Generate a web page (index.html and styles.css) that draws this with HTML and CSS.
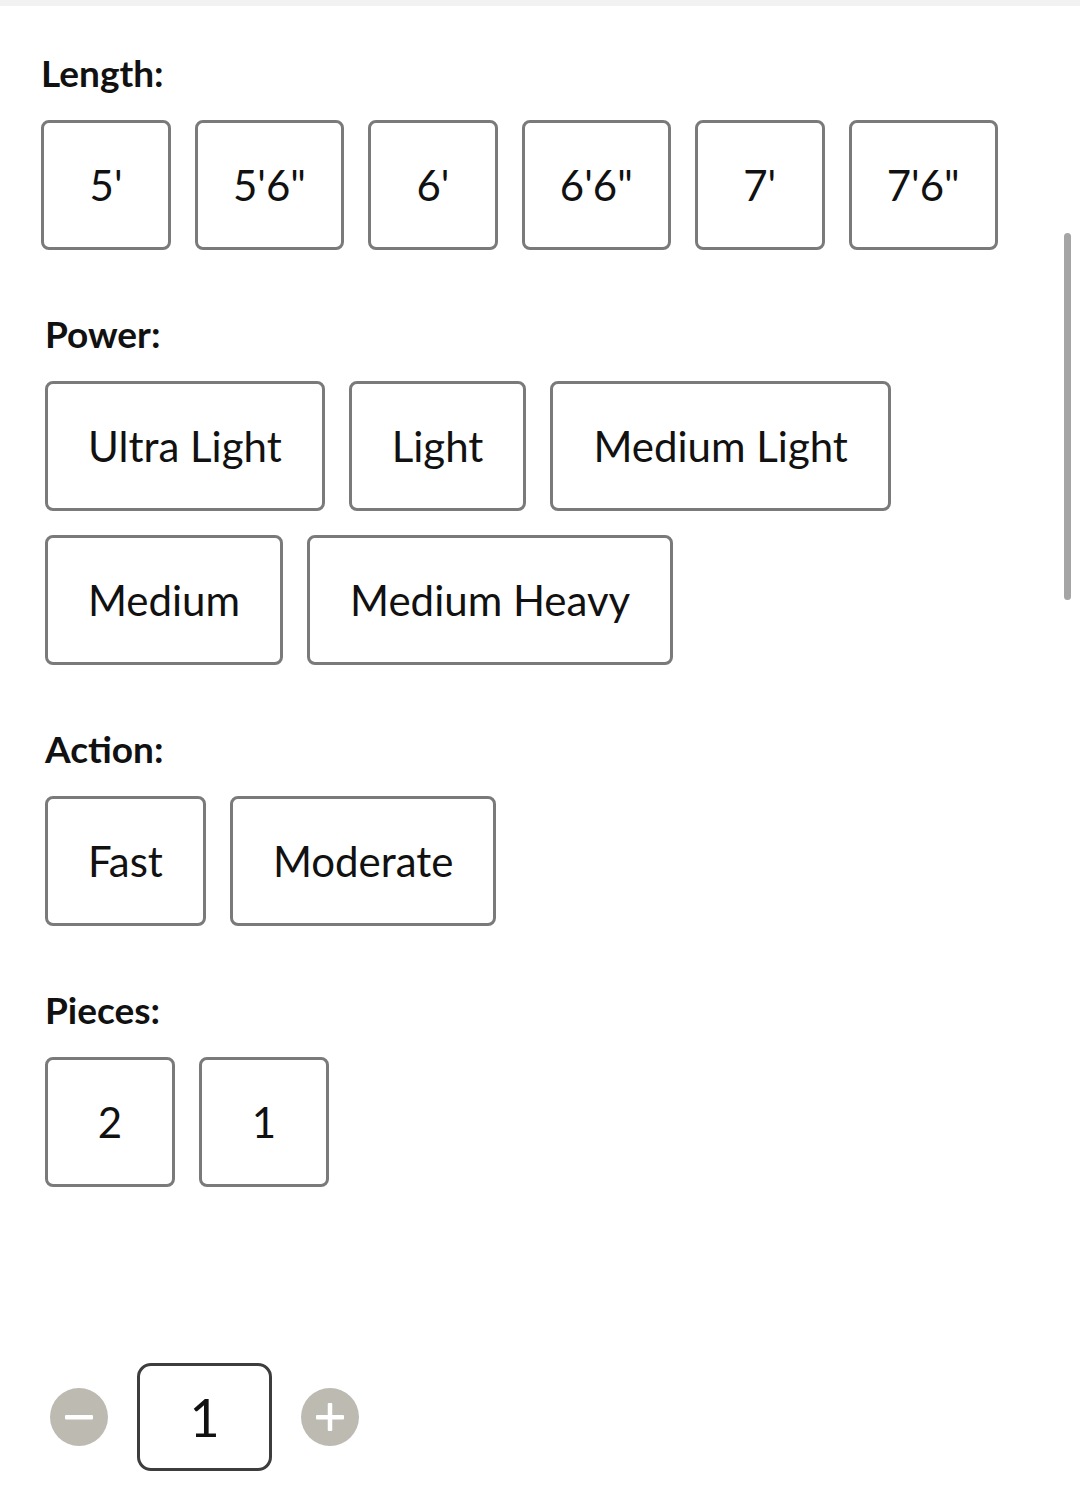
FILE: index.html
```html
<!DOCTYPE html>
<html lang="en">
<head>
<meta charset="utf-8">
<title>Product options</title>
<link rel="stylesheet" href="styles.css">
</head>
<body>
<div class="topbar"></div>
<main class="options">
  <section class="option option--length">
    <h2 class="option__label">Length:</h2>
    <div class="option__choices">
      <button class="choice choice--compact">5'</button>
      <button class="choice choice--compact">5'6"</button>
      <button class="choice choice--compact">6'</button>
      <button class="choice choice--compact">6'6"</button>
      <button class="choice choice--compact">7'</button>
      <button class="choice choice--compact">7'6"</button>
    </div>
  </section>
  <section class="option">
    <h2 class="option__label">Power:</h2>
    <div class="option__choices">
      <button class="choice">Ultra Light</button>
      <button class="choice">Light</button>
      <button class="choice">Medium Light</button>
      <button class="choice">Medium</button>
      <button class="choice">Medium Heavy</button>
    </div>
  </section>
  <section class="option">
    <h2 class="option__label">Action:</h2>
    <div class="option__choices">
      <button class="choice">Fast</button>
      <button class="choice">Moderate</button>
    </div>
  </section>
  <section class="option">
    <h2 class="option__label">Pieces:</h2>
    <div class="option__choices">
      <button class="choice">2</button>
      <button class="choice">1</button>
    </div>
  </section>
  <div class="qty">
    <button class="qty__btn" aria-label="Decrease">
      <svg viewBox="0 0 58 58" width="58" height="58"><rect x="15" y="27" width="28" height="4.5" rx="1" fill="#fff"/></svg>
    </button>
    <div class="qty__value">1</div>
    <button class="qty__btn" aria-label="Increase">
      <svg viewBox="0 0 58 58" width="58" height="58"><rect x="15" y="27" width="28" height="4.5" rx="1" fill="#fff"/><rect x="26.75" y="15" width="4.5" height="28" rx="1" fill="#fff"/></svg>
    </button>
  </div>
</main>
<div class="scrollbar"></div>
</body>
</html>
```

FILE: styles.css
```css
html, body {
  margin: 0;
  padding: 0;
  background: #ffffff;
}

body {
  font-family: Lato, "Open Sans", sans-serif;
  color: #111111;
  position: relative;
  min-height: 1506px;
}

.topbar {
  height: 6px;
  background: #f2f2f2;
}

.options {
  padding: 45px 0 0 45px;
}

.option + .option {
  margin-top: 62px;
}

.option--length {
  margin-left: -4px;
}

.option__label {
  margin: 0 0 25px;
  font-size: 37px;
  line-height: 44px;
  font-weight: 700;
  color: #111111;
}

.option__choices {
  display: flex;
  flex-wrap: wrap;
  gap: 24px 24px;
  max-width: 1000px;
}

.choice {
  box-sizing: border-box;
  height: 130px;
  min-width: 130px;
  padding: 0 40px;
  border: 3px solid #7a7a7a;
  border-radius: 8px;
  background: #ffffff;
  font-family: Lato, "Open Sans", sans-serif;
  font-size: 42px;
  font-weight: 400;
  color: #111111;
  display: flex;
  align-items: center;
  justify-content: center;
  white-space: nowrap;
}

.choice--compact {
  padding: 0 35px;
}

.qty {
  display: flex;
  align-items: center;
  gap: 29px;
  margin: 176px 0 0 5px;
}

.qty__btn {
  width: 58px;
  height: 58px;
  padding: 0;
  border: none;
  border-radius: 50%;
  background: #bcbab1;
  display: flex;
  align-items: center;
  justify-content: center;
}

.qty__btn svg {
  display: block;
}

.qty__value {
  box-sizing: border-box;
  width: 135px;
  height: 108px;
  border: 3px solid #3d3d3d;
  border-radius: 14px;
  display: flex;
  align-items: center;
  justify-content: center;
  font-size: 52px;
  color: #111111;
}

.scrollbar {
  position: absolute;
  left: 1064px;
  top: 233px;
  width: 7px;
  height: 367px;
  border-radius: 4px;
  background: #a5a5a5;
}
```
